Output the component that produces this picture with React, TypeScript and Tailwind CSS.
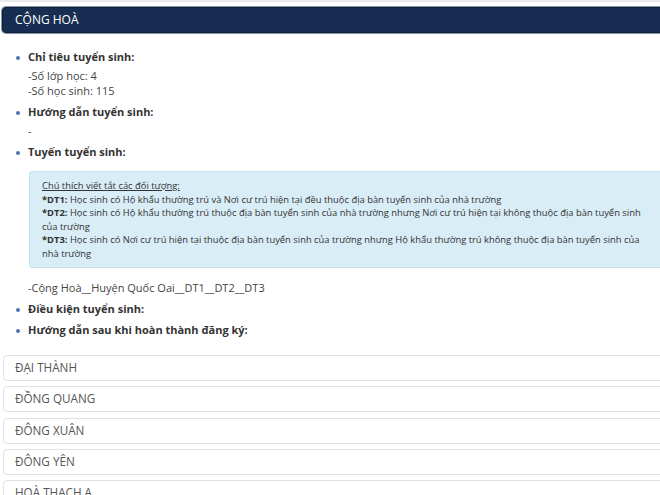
import React from 'react';

const font = { fontFamily: '"Open Sans", "Noto Sans", "DejaVu Sans", sans-serif' };

const schools = ['ĐẠI THÀNH', 'ĐỒNG QUANG', 'ĐÔNG XUÂN', 'ĐÔNG YÊN', 'HOÀ THẠCH A'];

function Label({ children }: { children: React.ReactNode }) {
  return (
    <div className="relative flex h-[20px] items-center pl-[28px] text-[11px] font-bold text-[#333]">
      <span className="absolute left-[16px] top-[9px] h-[4px] w-[4px] rounded-full bg-[#4d73ad]" />
      {children}
    </div>
  );
}

export default function App() {
  return (
    <div className="h-[495px] w-[660px] overflow-hidden bg-white" style={font}>
      <div className="w-[700px]">
        <div className="h-[2px] bg-[#ececec]" />
        <div className="ml-[2px] mt-[5px] flex h-[26px] items-center rounded-l-[4px] border border-[#0c1f3d] bg-[#172e52] pl-[12px] text-[12px] text-white shadow-[0_0_0_1px_#8a96a8]">
          CỘNG HOÀ
        </div>

        <ul className="mt-[14px] text-[#333]">
          <li className="mb-[4px]">
            <Label>Chỉ tiêu tuyển sinh:</Label>
            <div className="pl-[28px] pt-[1px] text-[11px] leading-[15px] text-[#444]">
              <div>-Số lớp học: 4</div>
              <div>-Số học sinh: 115</div>
            </div>
          </li>
          <li className="mb-[4px]">
            <Label>Hướng dẫn tuyển sinh:</Label>
            <div className="pl-[28px] pt-[1px] text-[11px] leading-[15px] text-[#444]">-</div>
          </li>
          <li className="mb-[1px]">
            <Label>Tuyến tuyển sinh:</Label>
            <div className="ml-[29px] mt-[9px] w-[640px] rounded-[3px] border border-[#c6e3ef] bg-[#d9edf7] py-[7px] pl-[12px] pr-[24px] text-[9.4px] leading-[13.5px] text-[#333]">
              <div className="underline">Chú thích viết tắt các đối tượng:</div>
              <div>
                <b>*DT1:</b> Học sinh có Hộ khẩu thường trú và Nơi cư trú hiện tại đều thuộc địa bàn tuyển sinh của nhà trường
              </div>
              <div>
                <b>*DT2:</b> Học sinh có Hộ khẩu thường trú thuộc địa bàn tuyển sinh của nhà trường nhưng Nơi cư trú hiện tại không thuộc địa bàn tuyển sinh của trường
              </div>
              <div>
                <b>*DT3:</b> Học sinh có Nơi cư trú hiện tại thuộc địa bàn tuyển sinh của trường nhưng Hộ khẩu thường trú không thuộc địa bàn tuyển sinh của nhà trường
              </div>
            </div>
            <div className="mt-[12px] pb-[3px] pl-[28px] text-[11px] leading-[15px] text-[#444]">-Cộng Hoà__Huyện Quốc Oai__DT1__DT2__DT3</div>
          </li>
          <li className="mb-[1px]">
            <Label>Điều kiện tuyển sinh:</Label>
          </li>
          <li>
            <Label>Hướng dẫn sau khi hoàn thành đăng ký:</Label>
          </li>
        </ul>

        <div className="ml-[3px] mt-[15px] flex flex-col gap-[5.25px]">
          {schools.map((s) => (
            <div
              key={s}
              className="flex h-[26px] items-center rounded-l-[4px] border border-[#e2e2e2] bg-white pl-[11px] text-[11.7px] text-[#555]"
            >
              {s}
            </div>
          ))}
        </div>
      </div>
    </div>
  );
}
